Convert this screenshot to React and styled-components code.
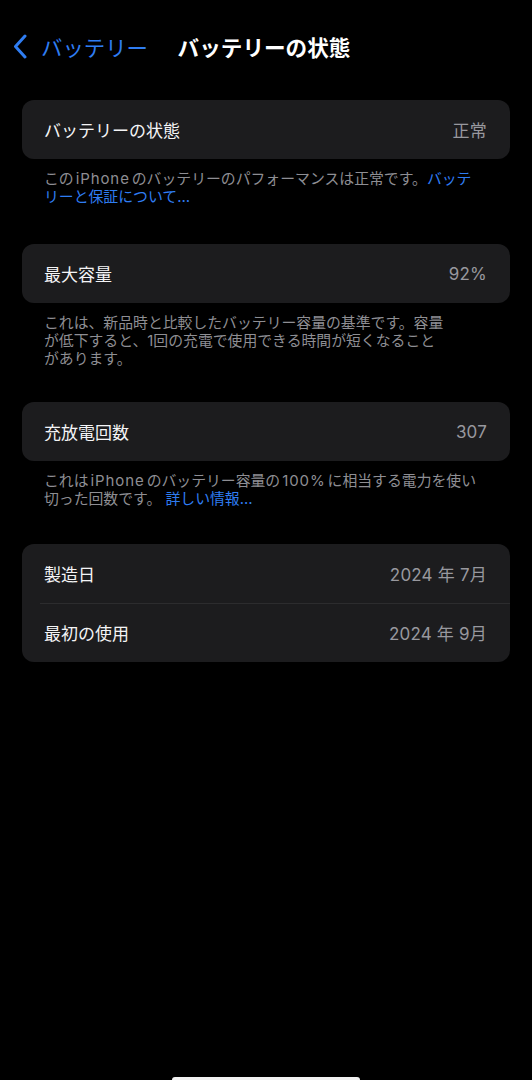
import React from "react";
import styled, { createGlobalStyle } from "styled-components";

const GlobalStyle = createGlobalStyle`
  html, body {
    margin: 0;
    padding: 0;
    background: #000;
  }
  body {
    font-family: "Inter", "Noto Sans CJK JP", sans-serif;
    color: #fff;
    -webkit-font-smoothing: antialiased;
  }
`;

const Screen = styled.div`
  min-height: 1080px;
  background: #000;
`;

const NavBar = styled.div`
  height: 92px;
  display: grid;
  grid-template-columns: 1fr auto 1fr;
  align-items: center;
`;

const BackButton = styled.div`
  display: flex;
  align-items: center;
  gap: 14px;
  padding-left: 13px;
  color: #2f7df2;
  font-size: 21.4px;
  white-space: nowrap;
`;

const Title = styled.div`
  font-size: 21.6px;
  font-weight: 700;
  color: #fff;
  white-space: nowrap;
  padding-right: 4px;
`;

const Content = styled.div`
  padding: 8px 22px 0;
`;

const Card = styled.div`
  background: #1c1c1e;
  border-radius: 12px;
  overflow: hidden;
`;

const Row = styled.div`
  height: 59px;
  display: flex;
  align-items: center;
  justify-content: space-between;
  padding: 0 23px 0 22px;
  font-size: 17px;
  position: relative;
  ${(p) =>
    p.$divider &&
    `
    &::before {
      content: "";
      position: absolute;
      top: 0;
      left: 18px;
      right: 0;
      height: 1px;
      background: #2c2c2e;
    }
  `}
`;

const Label = styled.span`
  color: #f4f4f6;
`;

const Value = styled.span`
  color: #98989e;
  letter-spacing: 0.2px;
`;

const Footer = styled.div`
  padding: 11px 22px 0;
  margin-bottom: ${(p) => p.$gap || 36}px;
  font-size: 14.85px;
  line-height: 18px;
  color: #8e8e93;
  white-space: nowrap;
`;

const Line = styled.div``;

const Latin = styled.span`
  font-size: 15px;
  letter-spacing: 0.9px;
  margin: 0 2px;
`;

const Link = styled.span`
  color: #2f7df2;
`;

const HomeIndicator = styled.div`
  position: fixed;
  left: 266px;
  transform: translateX(-50%);
  bottom: -3px;
  width: 188px;
  height: 6px;
  border-radius: 3px;
  background: #f2f2f2;
`;

const Chevron = () => (
  <svg width="14" height="25" viewBox="0 0 14 25" fill="none">
    <path
      d="M12 2 L2.5 12.5 L12 23"
      stroke="#2f7df2"
      strokeWidth="3"
      strokeLinecap="round"
      strokeLinejoin="round"
    />
  </svg>
);

export default function App() {
  return (
    <Screen>
      <GlobalStyle />
      <NavBar>
        <BackButton>
          <Chevron />
          <span>バッテリー</span>
        </BackButton>
        <Title>バッテリーの状態</Title>
        <div />
      </NavBar>
      <Content>
        <Card>
          <Row>
            <Label>バッテリーの状態</Label>
            <Value>正常</Value>
          </Row>
        </Card>
        <Footer $gap={38}>
          <Line>
            この<Latin>iPhone</Latin>のバッテリーのパフォーマンスは正常です。<Link>バッテ</Link>
          </Line>
          <Line>
            <Link>リーと保証について…</Link>
          </Line>
        </Footer>

        <Card>
          <Row>
            <Label>最大容量</Label>
            <Value>92%</Value>
          </Row>
        </Card>
        <Footer $gap={34}>
          <Line>これは、新品時と比較したバッテリー容量の基準です。容量</Line>
          <Line>が低下すると、1回の充電で使用できる時間が短くなること</Line>
          <Line>があります。</Line>
        </Footer>

        <Card>
          <Row>
            <Label>充放電回数</Label>
            <Value>307</Value>
          </Row>
        </Card>
        <Footer>
          <Line>
            これは<Latin>iPhone</Latin>のバッテリー容量の<Latin>100%</Latin>に相当する電力を使い
          </Line>
          <Line>
            切った回数です。 <Link>詳しい情報…</Link>
          </Line>
        </Footer>

        <Card>
          <Row>
            <Label>製造日</Label>
            <Value>2024 年 7月</Value>
          </Row>
          <Row $divider>
            <Label>最初の使用</Label>
            <Value>2024 年 9月</Value>
          </Row>
        </Card>
      </Content>
      <HomeIndicator />
    </Screen>
  );
}
